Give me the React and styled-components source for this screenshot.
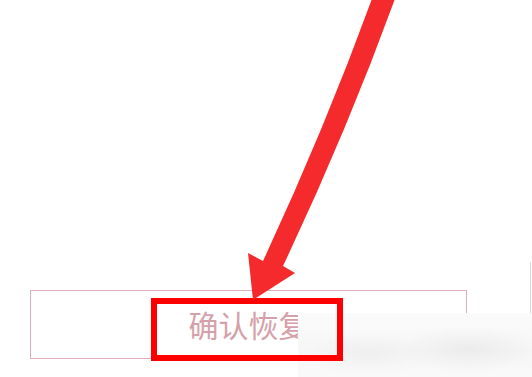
import React from "react";
import styled, { createGlobalStyle } from "styled-components";

const Global = createGlobalStyle`
  html, body { margin: 0; padding: 0; background: #ffffff; }
  body { font-family: "Noto Sans CJK SC", "Noto Sans", sans-serif; }
`;

const Page = styled.div`
  position: relative;
  width: 532px;
  height: 377px;
  box-sizing: border-box;
  padding: 290px 65px 0 30px;
  background: #ffffff;
  overflow: hidden;
`;

const ConfirmButton = styled.button`
  display: flex;
  align-items: center;
  justify-content: center;
  width: 437px;
  height: 69px;
  box-sizing: border-box;
  margin: 0;
  padding: 0 0 2px 0;
  background: #ffffff;
  border: 1.5px solid #dbb0b8;
  border-radius: 0;
  color: #d6a0aa;
  font-family: "Noto Sans CJK SC", "Noto Sans", sans-serif;
  font-size: 30px;
  font-weight: 400;
  letter-spacing: 0;
  cursor: pointer;
`;

const Highlight = styled.div`
  position: absolute;
  left: 151px;
  top: 298px;
  width: 192px;
  height: 63px;
  box-sizing: border-box;
  border: 6px solid #fe0000;
  z-index: 3;
`;

const Watermark = styled.div`
  position: absolute;
  left: 298px;
  top: 313px;
  right: 0;
  bottom: 0;
  z-index: 2;
  background:
    radial-gradient(ellipse 60px 20px at 70px 40px, rgba(225, 225, 225, 0.35), rgba(255, 255, 255, 0) 100%),
    radial-gradient(ellipse 70px 22px at 170px 36px, rgba(220, 220, 220, 0.4), rgba(255, 255, 255, 0) 100%),
    linear-gradient(180deg, #fbfbfb 0%, #f6f6f6 60%, #f9f9f9 100%);
`;

const EdgeLine = styled.div`
  position: absolute;
  right: 1px;
  top: 262px;
  width: 1px;
  height: 52px;
  background: #d8d8d8;
  z-index: 1;
`;

const ArrowSvg = styled.svg`
  position: absolute;
  left: 0;
  top: 0;
  width: 532px;
  height: 377px;
  z-index: 4;
  pointer-events: none;
`;

function Arrow() {
  return (
    <ArrowSvg viewBox="0 0 532 377">
      <path
        d="M 373 -4 Q 325 128 263 261 L 248 253 L 253 300 L 295 273 L 283 266 Q 347 131 396 -4 Z"
        fill="#f42a2c"
      />
    </ArrowSvg>
  );
}

export default function App() {
  return (
    <>
      <Global />
      <Page>
        <ConfirmButton>确认恢复</ConfirmButton>
        <EdgeLine />
        <Watermark />
        <Highlight />
        <Arrow />
      </Page>
    </>
  );
}
